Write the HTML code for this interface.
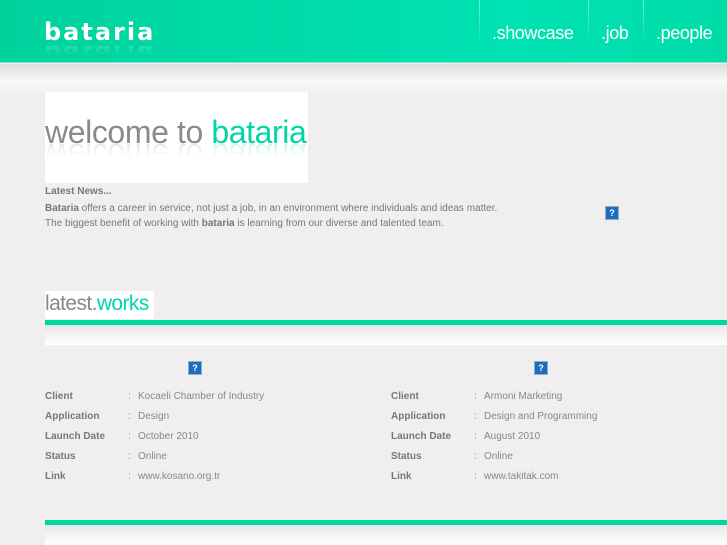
<!DOCTYPE html>
<html><head><meta charset="utf-8"><style>
*{margin:0;padding:0;box-sizing:border-box}
body{width:727px;height:545px;overflow:hidden;background:#efefef;font-family:"Liberation Sans",sans-serif;position:relative}
.hdr{position:absolute;left:0;top:0;width:727px;height:63px;background:linear-gradient(to right,#00d29c,#00e2b2 70%,#00dca8);border-bottom:1px solid #7ee8cc}
.strip{position:absolute;left:0;top:64px;width:727px;height:28px;background:linear-gradient(#dcdcdc,#f8f8f8 60%,#f2f2f2)}
.logo{position:absolute;left:44px;top:17px;font-family:"DejaVu Sans",sans-serif;font-weight:bold;font-size:24px;color:#fff;letter-spacing:2px;line-height:30px}
.logo.r{top:39px;transform:scaleY(-1);opacity:.3;-webkit-mask-image:linear-gradient(to top,#000,transparent 55%);mask-image:linear-gradient(to top,#000,transparent 55%)}
.nav{position:absolute;top:21px;color:#fff;font-size:18px;letter-spacing:-.4px;line-height:24px}
.div{position:absolute;top:0;width:1px;height:44px;background:linear-gradient(rgba(255,255,255,.45),rgba(255,255,255,0))}
.wel{position:absolute;left:45px;top:92px;width:263px;height:91px;background:#fff;overflow:hidden}
.wt{position:absolute;left:0;top:22px;font-size:32px;letter-spacing:-.4px;color:#8a8a8a;line-height:36px;white-space:nowrap}
.wt b{font-weight:normal;color:#00d6a4}
.wt.r{top:45px;transform:scaleY(-1);opacity:.3;-webkit-mask-image:linear-gradient(to top,#000,transparent 55%);mask-image:linear-gradient(to top,#000,transparent 55%)}
.news{position:absolute;left:45px;top:185px;font-size:10px;color:#777;line-height:14px;letter-spacing:0}
.q{position:absolute;width:14px;height:14px;background:#1d6cc4;border:1px solid #9ab;color:#fff;font-size:9px;font-weight:bold;text-align:center;line-height:12px}
.lw{position:absolute;left:45px;top:291px;width:109px;height:28px;background:#fff;font-size:21px;letter-spacing:-.6px;color:#888;line-height:26px;white-space:nowrap}
.lw b{font-weight:normal;color:#00d6a4}
.bar{position:absolute;left:45px;width:682px;height:5px;background:#00d8a2}
.fade{position:absolute;left:45px;width:682px;height:20px;background:linear-gradient(#e8e8e8,#fff)}
.row{position:absolute;font-size:10px;color:#888;line-height:12px;letter-spacing:0}
.row b{color:#777}
</style></head><body>
<div class="hdr"></div>
<div class="logo">bataria</div>
<div class="logo r">bataria</div>
<div class="div" style="left:479px"></div>
<div class="div" style="left:588px"></div>
<div class="div" style="left:643px"></div>
<div class="nav" style="left:492px">.showcase</div>
<div class="nav" style="left:601px">.job</div>
<div class="nav" style="left:656px">.people</div>
<div class="strip"></div>
<div class="wel"><div class="wt">welcome to <b>bataria</b></div><div class="wt r">welcome to <b>bataria</b></div></div>
<div class="news"><b>Latest News...</b><br><span style="line-height:15px;display:block;margin-top:2px"><b>Bataria</b> offers a career in service, not just a job, in an environment where individuals and ideas matter.<br>The biggest benefit of working with <b>bataria</b> is learning from our diverse and talented team.</span></div>
<div class="q" style="left:605px;top:206px">?</div>
<div class="lw">latest.<b>works</b></div>
<div class="bar" style="top:320px"></div>
<div class="fade" style="top:325px"></div>
<div class="q" style="left:188px;top:361px">?</div>
<div class="q" style="left:534px;top:361px">?</div>
<div class="row" style="left:45px;top:391px"><b>Client</b></div><div class="row" style="left:128px;top:391px">:</div><div class="row" style="left:138px;top:391px">Kocaeli Chamber of Industry</div>
<div class="row" style="left:45px;top:411px"><b>Application</b></div><div class="row" style="left:128px;top:411px">:</div><div class="row" style="left:138px;top:411px">Design</div>
<div class="row" style="left:45px;top:431px"><b>Launch Date</b></div><div class="row" style="left:128px;top:431px">:</div><div class="row" style="left:138px;top:431px">October 2010</div>
<div class="row" style="left:45px;top:451px"><b>Status</b></div><div class="row" style="left:128px;top:451px">:</div><div class="row" style="left:138px;top:451px">Online</div>
<div class="row" style="left:45px;top:471px"><b>Link</b></div><div class="row" style="left:128px;top:471px">:</div><div class="row" style="left:138px;top:471px">www.kosano.org.tr</div>
<div class="row" style="left:391px;top:391px"><b>Client</b></div><div class="row" style="left:474px;top:391px">:</div><div class="row" style="left:484px;top:391px">Armoni Marketing</div>
<div class="row" style="left:391px;top:411px"><b>Application</b></div><div class="row" style="left:474px;top:411px">:</div><div class="row" style="left:484px;top:411px">Design and Programming</div>
<div class="row" style="left:391px;top:431px"><b>Launch Date</b></div><div class="row" style="left:474px;top:431px">:</div><div class="row" style="left:484px;top:431px">August 2010</div>
<div class="row" style="left:391px;top:451px"><b>Status</b></div><div class="row" style="left:474px;top:451px">:</div><div class="row" style="left:484px;top:451px">Online</div>
<div class="row" style="left:391px;top:471px"><b>Link</b></div><div class="row" style="left:474px;top:471px">:</div><div class="row" style="left:484px;top:471px">www.takitak.com</div>
<div class="bar" style="top:520px"></div>
<div class="fade" style="top:525px"></div>
</body></html>
